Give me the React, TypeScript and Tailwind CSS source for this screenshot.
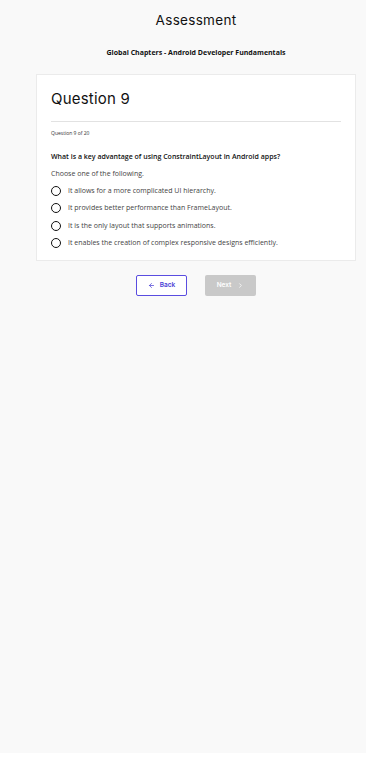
import React from 'react';

const options = [
  'It allows for a more complicated UI hierarchy.',
  'It provides better performance than FrameLayout.',
  'It is the only layout that supports animations.',
  'It enables the creation of complex responsive designs efficiently.',
];

export default function App() {
  return (
    <div className="w-[366px] h-[768px] bg-white">
      <div className="h-[753px] bg-[#f9f9f9] pl-[26px] flex flex-col items-center" style={{ fontFamily: '"Open Sans", sans-serif' }}>
        <h1 className="mt-[12px] text-[13.5px] leading-[17px] text-[#111] font-['Inter',sans-serif] tracking-[0.3px]">Assessment</h1>
        <p className="mt-[19px] text-[7px] leading-[10px] font-bold text-[#111]">Global Chapters - Android Developer Fundamentals</p>

        <div className="mt-[16px] w-[320px] bg-white border border-[#ebebeb] px-[14px] pt-[14px] pb-[12px]">
          <h2 className="text-[15px] leading-[20px] text-[#111] font-['Inter',sans-serif] tracking-[0.2px]">Question 9</h2>
          <div className="mt-[12px] h-px bg-[#e2e2e2]" />
          <p className="mt-[7px] text-[5px] leading-[8px] text-[#333]">Question 9 of 20</p>
          <p className="mt-[15px] text-[7px] leading-[10px] font-semibold text-[#111]">What is a key advantage of using ConstraintLayout in Android apps?</p>
          <p className="mt-[7px] text-[7px] leading-[10px] text-[#444]">Choose one of the following.</p>
          <div className="mt-[7px] flex flex-col gap-[7.3px]">
            {options.map(o => (
              <label key={o} className="flex items-center gap-[7px]">
                <span className="w-[10px] h-[10px] rounded-full border-[1.3px] border-[#111] shrink-0" />
                <span className="text-[7px] leading-[10px] text-[#444]">{o}</span>
              </label>
            ))}
          </div>
        </div>

        <div className="mt-[14px] flex gap-[18px] font-['Inter',sans-serif]">
          <button className="w-[51px] h-[21px] border border-[#5a4de0] rounded-[2px] bg-white text-[#4a3fd6] text-[6.5px] font-semibold flex items-center justify-center gap-[5px]">
            <svg width="7" height="7" viewBox="0 0 24 24" fill="none" stroke="currentColor" strokeWidth="2.5" strokeLinecap="round" strokeLinejoin="round"><path d="M19 12H5M12 19l-7-7 7-7" /></svg>
            Back
          </button>
          <button className="w-[51px] h-[21px] rounded-[2px] bg-[#c9c9c9] text-white text-[6.5px] font-semibold flex items-center justify-center gap-[6px]">
            Next
            <svg width="7" height="7" viewBox="0 0 24 24" fill="none" stroke="currentColor" strokeWidth="2.5" strokeLinecap="round" strokeLinejoin="round"><path d="M9 18l6-6-6-6" /></svg>
          </button>
        </div>
      </div>
    </div>
  );
}
